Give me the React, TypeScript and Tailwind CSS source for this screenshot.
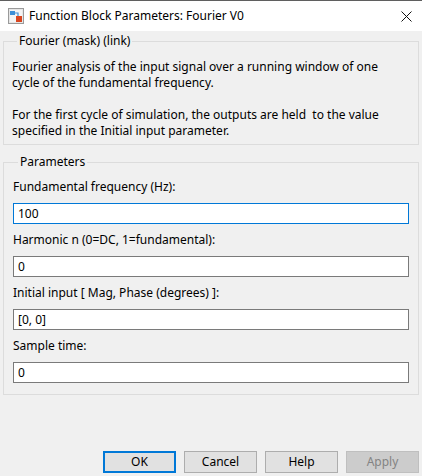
import React from "react";

const font = { fontFamily: '"Segoe UI", "Noto Sans", "Open Sans", sans-serif' };

function BlockIcon() {
  return (
    <svg width="16" height="16" viewBox="0 0 16 16">
      <rect x="0.5" y="0.5" width="15" height="15" fill="#e6e6e6" stroke="#9a9a9a" />
      <rect x="2" y="2" width="12" height="12" fill="#f4f4f4" />
      <rect x="2" y="3" width="5" height="4" fill="#3d8fd6" />
      <path d="M7 5 H10 V8" stroke="#3d8fd6" strokeWidth="1.2" fill="none" />
      <rect x="8" y="8" width="6" height="6" fill="#d9451f" />
    </svg>
  );
}

function Field({ label, value, focused }: { label: string; value: string; focused?: boolean }) {
  return (
    <div className="flex flex-col">
      <div className="h-4 leading-4">{label}</div>
      <input
        readOnly
        value={value}
        className={
          "mt-[8px] h-[21px] w-full bg-white px-[4px] text-[12px] text-black outline-none " +
          (focused ? "border border-[#0078d7]" : "border border-[#7a7a7a]")
        }
        style={font}
      />
    </div>
  );
}

function Btn({ children, primary, disabled }: { children: React.ReactNode; primary?: boolean; disabled?: boolean }) {
  let cls = "h-[22px] w-[73px] text-[12px] leading-none ";
  if (primary) cls += "border-2 border-[#0078d7] bg-[#e1e1e1] text-black";
  else if (disabled) cls += "border border-[#bfbfbf] bg-[#cccccc] text-[#838383]";
  else cls += "border border-[#adadad] bg-[#e1e1e1] text-black";
  return (
    <button className={cls} style={font}>
      {children}
    </button>
  );
}

export default function App() {
  return (
    <div className="flex h-[476px] w-[422px] flex-col text-[12px] text-black" style={font}>
      <div className="flex h-[31px] items-center border-t border-[#5f5f5f] bg-white pl-[8px] pr-[10px]">
        <BlockIcon />
        <span className="ml-[5px] flex-1">Function Block Parameters: Fourier V0</span>
        <svg width="11" height="11" viewBox="0 0 11 11">
          <path d="M0.5 0.5 L10.5 10.5 M10.5 0.5 L0.5 10.5" stroke="#111" strokeWidth="1" />
        </svg>
      </div>
      <div className="flex flex-1 flex-col bg-[#f0f0f0] px-[3px] pb-[3px]">
        <fieldset className="mt-[2px] border border-[#dcdcdc] px-[8px] pb-[5px]">
          <legend className="ml-[5px] px-[2px] leading-4">Fourier (mask) (link)</legend>
          <p className="mt-[10px] whitespace-pre leading-4">
            {"Fourier analysis of the input signal over a running window of one\ncycle of the fundamental frequency.\n\nFor the first cycle of simulation, the outputs are held  to the value\nspecified in the Initial input parameter."}
          </p>
        </fieldset>
        <fieldset className="mt-[9px] flex flex-col border border-[#dcdcdc] px-[9px] pb-[11px]">
          <legend className="ml-[5px] px-[2px] leading-4">Parameters</legend>
          <div className="mt-[9px] flex flex-col gap-[8px]">
            <Field label="Fundamental frequency (Hz):" value="100" focused />
            <Field label="Harmonic n (0=DC, 1=fundamental):" value="0" />
            <Field label="Initial input [ Mag, Phase (degrees) ]:" value="[0, 0]" />
            <Field label="Sample time:" value="0" />
          </div>
        </fieldset>
        <div className="mt-auto flex justify-end gap-[8px]">
          <Btn primary>OK</Btn>
          <Btn>Cancel</Btn>
          <Btn>Help</Btn>
          <Btn disabled>Apply</Btn>
        </div>
      </div>
    </div>
  );
}
